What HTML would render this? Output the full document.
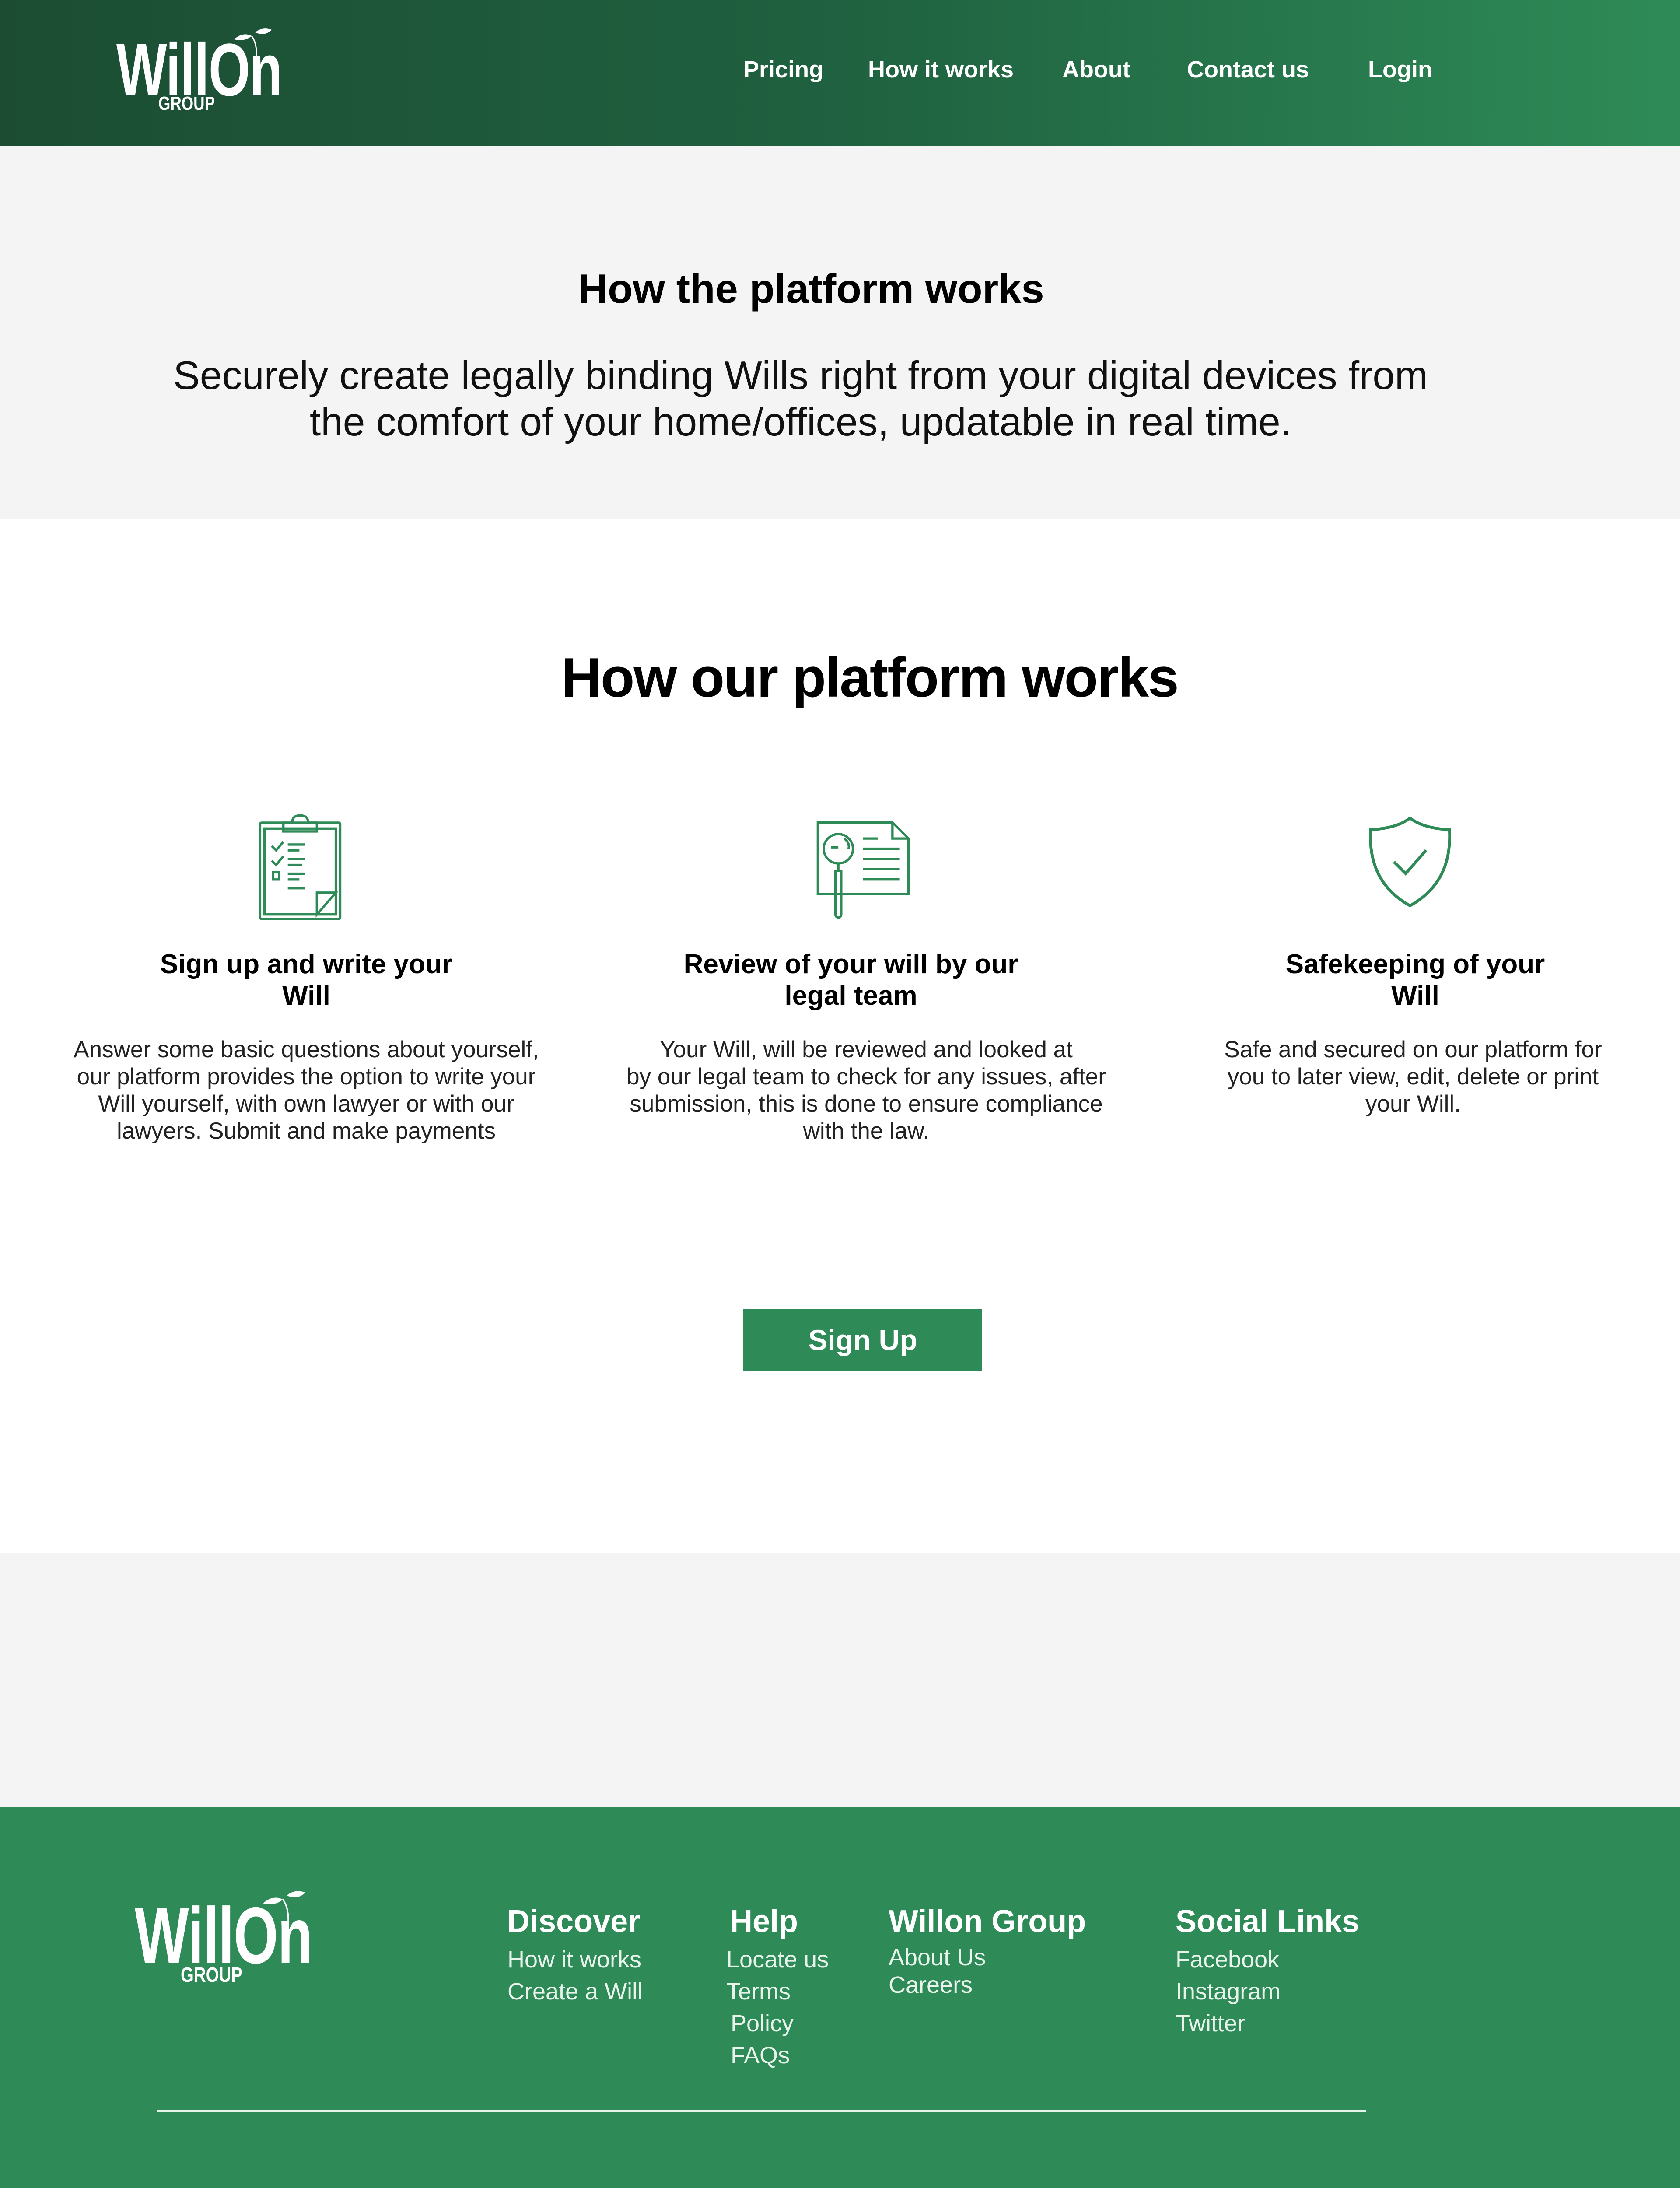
<!DOCTYPE html>
<html><head><meta charset="utf-8"><style>
*{margin:0;padding:0;box-sizing:border-box}
html,body{width:3840px;height:5224px;overflow:hidden}
body{font-family:"Liberation Sans",sans-serif;background:#fff;position:relative;color:#000}
.abs{position:absolute}
header{position:absolute;left:0;top:0;width:3840px;height:333px;background:linear-gradient(90deg,#1c4d33 0%,#1f6140 50%,#2e8b57 100%)}
.nav{position:absolute;top:128px;color:#fff;font-weight:bold;font-size:54px;white-space:nowrap}
.logo{position:absolute;color:#fff;font-weight:bold;white-space:nowrap;transform-origin:0 0}
.c{text-align:center}
.col h3{font-size:62px;font-weight:bold;line-height:72px}
.col p{font-size:53px;line-height:62px;color:#222;margin-top:56px}
.fh{position:absolute;top:4350px;font-size:72px;font-weight:bold;color:#fff;white-space:nowrap}
.fl{position:absolute;font-size:54px;color:#e8f3ec;line-height:73px;white-space:nowrap}
</style></head><body>
<header>
 <div class="logo" style="left:266px;top:62px;font-size:170px;letter-spacing:-2px;transform:scaleX(0.72)">WillOn</div>
 <div class="logo" style="left:362px;top:212px;font-size:44px;transform:scaleX(0.8)">GROUP</div>
 <svg class="abs" style="left:535px;top:62px" width="100" height="80" viewBox="0 0 100 80"><path d="M0 28 Q20 10 40 20 Q25 34 0 28Z M48 12 Q65 -2 86 6 Q70 22 48 12Z" fill="#fff"/><path d="M40 20 Q55 40 50 80" stroke="#fff" stroke-width="3" fill="none"/></svg>
 <div class="nav" style="left:1699px">Pricing</div>
 <div class="nav" style="left:1984px">How it works</div>
 <div class="nav" style="left:2428px">About</div>
 <div class="nav" style="left:2713px">Contact us</div>
 <div class="nav" style="left:3127px">Login</div>
</header>
<div class="abs" style="left:0;top:333px;width:3840px;height:853px;background:#f4f4f4"></div>
<div class="abs c" style="left:0;top:606px;width:3708px;font-size:94px;font-weight:bold">How the platform works</div>
<div class="abs c" style="left:-90px;top:806px;width:3840px;font-size:91px;line-height:106px;color:#111">Securely create legally binding Wills right from your digital devices from<br>the comfort of your home/offices, updatable in real time.</div>
<div class="abs c" style="left:0;top:1475px;width:3976px;font-size:127px;font-weight:bold;letter-spacing:-2px">How our platform works</div>

<svg class="abs" style="left:590px;top:1860px" width="192" height="243" viewBox="0 0 57 73" fill="none" stroke="#2e8b57" stroke-width="1.6"><rect x="1" y="6" width="55" height="66" rx="1"/><rect x="4" y="10" width="49" height="59"/><path d="M17 6 V12 H40 V6 H34 Q34 1 28.5 1 Q23 1 23 6Z"/><path d="M9 22l3 3 5-6M9 32l3 3 5-6"/><path d="M20 21h12M20 25h8M20 31h12M20 35h10M20 41h12M20 45h8M20 51h12"/><rect x="10" y="40" width="4" height="5"/><path d="M53 54 L40 69 V54Z"/></svg>
<svg class="abs" style="left:1866px;top:1876px" width="214" height="224" viewBox="0 0 64 67" fill="none" stroke="#2e8b57" stroke-width="1.6"><path d="M1 1 H52 L63 12 V50 H1Z"/><path d="M52 1V12H63"/><circle cx="15" cy="19" r="10"/><path d="M10 18h5M19 12q4 3 3 7"/><path d="M15 29v5M13 34h4v30a2 2 0 0 1-4 0Z"/><path d="M32 12h10M32 19h25M32 26h25M32 33h25M32 40h25"/></svg>
<svg class="abs" style="left:3126px;top:1866px" width="194" height="207" viewBox="0 0 58 62" fill="none" stroke="#2e8b57" stroke-width="2"><path d="M29 1 Q20 8 2 9 Q0 45 29 61 Q58 45 56 9 Q38 8 29 1Z"/><path d="M18 31l8 8 14-16"/></svg>

<div class="abs col c" style="left:150px;top:2168px;width:1100px"><h3>Sign up and write your<br>Will</h3><p>Answer some basic questions about yourself,<br>our platform provides the option to write your<br>Will yourself, with own lawyer or with our<br>lawyers. Submit and make payments</p></div>
<div class="abs col c" style="left:1370px;top:2168px;width:1200px"><h3 style="margin-left:-50px">Review of your will by our<br>legal team</h3><p style="margin-left:20px">Your Will, will be reviewed and looked at<br>by our legal team to check for any issues, after<br>submission, this is done to ensure compliance<br>with the law.</p></div>
<div class="abs col c" style="left:2690px;top:2168px;width:1100px"><h3 style="margin-left:-10px">Safekeeping of your<br>Will</h3><p style="margin-left:-20px">Safe and secured on our platform for<br>you to later view, edit, delete or print<br>your Will.</p></div>

<div class="abs c" style="left:1699px;top:2991px;width:546px;height:143px;background:#2e8b57;color:#fff;font-size:66px;font-weight:bold;line-height:143px">Sign Up</div>
<div class="abs" style="left:0;top:3550px;width:3840px;height:580px;background:#f4f4f4"></div>
<div class="abs" style="left:0;top:4130px;width:3840px;height:1094px;background:#2e8b57"></div>
<div class="logo" style="left:308px;top:4318px;font-size:182px;letter-spacing:-2px;transform:scaleX(0.72)">WillOn</div>
<div class="logo" style="left:413px;top:4486px;font-size:48px;transform:scaleX(0.8)">GROUP</div>
<svg class="abs" style="left:600px;top:4318px" width="115" height="90" viewBox="0 0 100 80"><path d="M0 28 Q20 10 40 20 Q25 34 0 28Z M48 12 Q65 -2 86 6 Q70 22 48 12Z" fill="#fff"/><path d="M40 20 Q55 40 50 80" stroke="#fff" stroke-width="3" fill="none"/></svg>
<div class="fh" style="left:1159px">Discover</div>
<div class="fh" style="left:1668px">Help</div>
<div class="fh" style="left:2031px">Willon Group</div>
<div class="fh" style="left:2687px">Social Links</div>
<div class="fl" style="left:1160px;top:4442px">How it works<br>Create a Will</div>
<div class="fl" style="left:1660px;top:4442px">Locate us<br>Terms<br><span style="margin-left:10px">Policy</span><br><span style="margin-left:10px">FAQs</span></div>
<div class="fl" style="left:2031px;top:4442px;line-height:63px">About Us<br>Careers</div>
<div class="fl" style="left:2687px;top:4442px">Facebook<br>Instagram<br>Twitter</div>
<div class="abs" style="left:360px;top:4822px;width:2762px;height:5px;background:#e8f3ec"></div>
<div class="abs c" style="left:0;top:5064px;width:3822px;color:#fff;font-size:53px;font-weight:bold">Ⓒ The Willon Group</div>
</body></html>
